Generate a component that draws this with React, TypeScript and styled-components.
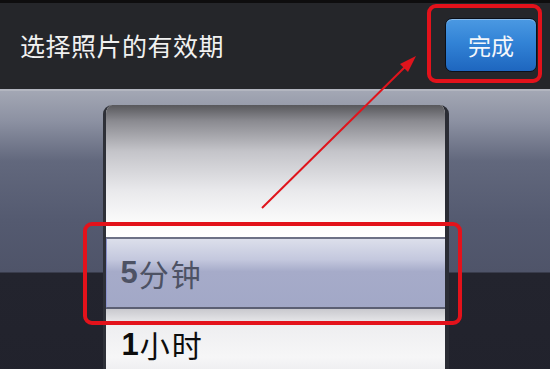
import React from 'react';
import styled, { createGlobalStyle } from 'styled-components';

const GlobalStyle = createGlobalStyle`
	*, *::before, *::after {
		box-sizing: border-box;
	}
	html, body {
		margin: 0;
		padding: 0;
		background: #1f2028;
	}
	body {
		font-family: 'Noto Sans CJK SC', 'Noto Sans', sans-serif;
	}
`;

type Item = { num: string; unit: string };

const items: Item[] = [
	{ num: '5', unit: '分钟' },
	{ num: '1', unit: '小时' },
];

export default function App() {
	return (
		<Screen>
			<GlobalStyle />
			<Header>
				<Title>选择照片的有效期</Title>
				<DoneButton>完成</DoneButton>
			</Header>
			<Body>
				<Wheel>
					<WheelTop />
					<Row $selected>
						<Num>{items[0].num}</Num>
						<Unit>{items[0].unit}</Unit>
					</Row>
					<Row>
						<Num>{items[1].num}</Num>
						<Unit>{items[1].unit}</Unit>
					</Row>
				</Wheel>
			</Body>
			<Highlight $left={427} $top={4} $width={115} $height={79} />
			<Highlight $left={83} $top={222} $width={379} $height={103} />
			<Arrow width="550" height="369" viewBox="0 0 550 369">
				<line x1="262" y1="208" x2="409" y2="63" stroke="#e0141c" strokeWidth="2" />
				<polygon points="416,56 400,64 408,72" fill="#e0141c" />
			</Arrow>
		</Screen>
	);
}

const Screen = styled.div`
	position: relative;
	width: 550px;
	height: 369px;
	overflow: hidden;
	display: flex;
	flex-direction: column;
	background: #22232d;
`;

const Header = styled.div`
	height: 89px;
	flex-shrink: 0;
	display: flex;
	align-items: center;
	justify-content: space-between;
	padding: 0 13px 0 20px;
	background: #25262a;
	border-top: 3px solid #0e0d0e;
`;

const Title = styled.div`
	color: #f1f1f1;
	font-size: 25px;
	letter-spacing: 0.5px;
	margin-top: -2px;
`;

const DoneButton = styled.button`
	width: 92px;
	height: 54px;
	margin-top: -2px;
	border: 1px solid #0b0f18;
	border-radius: 7px;
	background: linear-gradient(#4b99e2 0%, #3283d6 45%, #1e66bf 100%);
	box-shadow: inset 0 1px 0 rgba(255, 255, 255, 0.35);
	color: #f4f7fb;
	font-family: 'Noto Sans CJK SC', sans-serif;
	font-size: 23px;
	padding: 0;
`;

const Body = styled.div`
	flex: 1;
	display: flex;
	justify-content: center;
	padding: 14px 0 0 1px;
	border-top: 2px solid #b3b6c0;
	background: linear-gradient(
		#a3a7b4 0px,
		#8c91a2 30px,
		#62687d 70px,
		#545a70 130px,
		#4f5469 181px,
		#23242e 182px,
		#21222c 100%
	);
`;

const Wheel = styled.div`
	width: 346px;
	display: flex;
	flex-direction: column;
	border-radius: 9px 9px 0 0;
	border-left: 3px solid #2e3038;
	border-right: 4px solid #2a2c34;
	overflow: hidden;
	background: #f2f2f4;
`;

const WheelTop = styled.div`
	height: 132px;
	flex-shrink: 0;
	background: linear-gradient(
		#58585c 0%,
		#8a8a90 12%,
		#c4c4c9 35%,
		#e9e9ec 65%,
		#fafafa 88%,
		#ffffff 100%
	);
`;

const Row = styled.div<{ $selected?: boolean }>`
	height: ${(p) => (p.$selected ? 72 : 80)}px;
	flex-shrink: 0;
	display: flex;
	align-items: ${(p) => (p.$selected ? 'center' : 'flex-start')};
	padding: ${(p) => (p.$selected ? '0 0 0 14px' : '19px 0 0 16px')};
	gap: 1px;
	color: ${(p) => (p.$selected ? '#4d5264' : '#0d0d0d')};
	border-top: ${(p) => (p.$selected ? '2px solid #6d7186' : 'none')};
	border-bottom: ${(p) => (p.$selected ? '2px solid #5b5f73' : 'none')};
	border-left: ${(p) => (p.$selected ? '4px solid #8a92cc' : 'none')};
	background: ${(p) =>
		p.$selected
			? 'linear-gradient(#dcdfeb 0%, #c4c8de 30%, #a6abc9 48%, #a2a8c7 100%)'
			: 'linear-gradient(#c9c9ce 0%, #eeeef0 20%, #f6f6f7 60%, #e4e4e7 100%)'};
	margin-left: ${(p) => (p.$selected ? -3 : 0)}px;
	line-height: 1.1;
`;

const Num = styled.span`
	font-family: 'Liberation Sans', Arial, sans-serif;
	font-weight: bold;
	font-size: 31px;
`;

const Unit = styled.span`
	font-size: 30px;
	letter-spacing: 2px;
`;

const Highlight = styled.div<{ $left: number; $top: number; $width: number; $height: number }>`
	position: absolute;
	left: ${(p) => p.$left}px;
	top: ${(p) => p.$top}px;
	width: ${(p) => p.$width}px;
	height: ${(p) => p.$height}px;
	border: 4px solid #e3121b;
	border-radius: 9px;
`;

const Arrow = styled.svg`
	position: absolute;
	left: 0;
	top: 0;
	pointer-events: none;
`;
